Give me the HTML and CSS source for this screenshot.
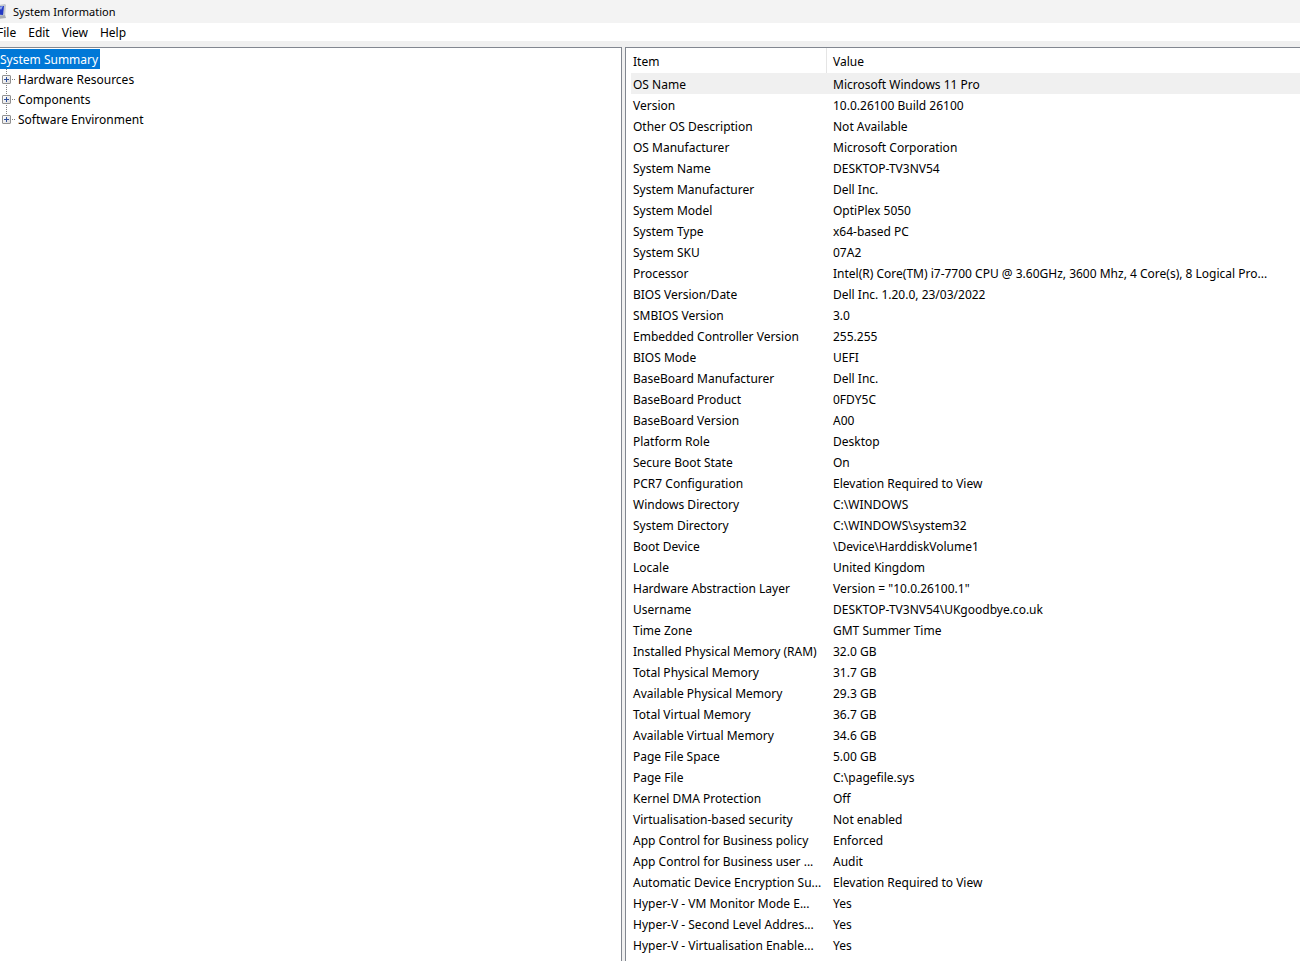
FILE: index.html
```html
<!DOCTYPE html>
<html lang="en">
  <head>
    <meta charset="UTF-8" />
    <meta name="viewport" content="width=device-width, initial-scale=1.0" />
    <title>System Information</title>
    <link rel="stylesheet" href="styles.css">
  </head>
  <body>
    <header class="title-bar">
      <svg class="app-icon" width="16" height="16" viewBox="0 0 16 16" aria-hidden="true">
        <path d="M1 2 L15 0 L16 1 L15 13 L2 12 Z" fill="#c4c8ce" />
        <path d="M2 3 L14 2 L13 11 L3 10 Z" fill="#2338c4" />
        <path d="M9 3 L13 2 L11 6 Z" fill="#8fa8f0" />
        <path d="M8 12 L15 11 L16 14 L8 15 Z" fill="#a9adb4" />
      </svg>
      <h1>System Information</h1>
    </header>

    <nav class="menu-bar">
      <button type="button">File</button>
      <button type="button">Edit</button>
      <button type="button">View</button>
      <button type="button">Help</button>
    </nav>

    <main class="panes">
      <section class="tree-pane">
        <a class="tree-root" href="#summary">System Summary</a>
        <ul class="tree">
          <li><button type="button" class="expander" aria-label="Expand Hardware Resources"></button><a href="#hardware">Hardware Resources</a></li>
          <li><button type="button" class="expander" aria-label="Expand Components"></button><a href="#components">Components</a></li>
          <li><button type="button" class="expander" aria-label="Expand Software Environment"></button><a href="#software">Software Environment</a></li>
        </ul>
      </section>

      <section class="detail-pane" id="summary">
        <table class="details">
          <thead>
            <tr><th class="item" scope="col">Item</th><th scope="col">Value</th></tr>
          </thead>
          <tbody>
            <tr class="selected"><td>OS Name</td><td>Microsoft Windows 11 Pro</td></tr>
            <tr><td>Version</td><td>10.0.26100 Build 26100</td></tr>
            <tr><td>Other OS Description</td><td>Not Available</td></tr>
            <tr><td>OS Manufacturer</td><td>Microsoft Corporation</td></tr>
            <tr><td>System Name</td><td>DESKTOP-TV3NV54</td></tr>
            <tr><td>System Manufacturer</td><td>Dell Inc.</td></tr>
            <tr><td>System Model</td><td>OptiPlex 5050</td></tr>
            <tr><td>System Type</td><td>x64-based PC</td></tr>
            <tr><td>System SKU</td><td>07A2</td></tr>
            <tr><td>Processor</td><td>Intel(R) Core(TM) i7-7700 CPU @ 3.60GHz, 3600 Mhz, 4 Core(s), 8 Logical Pro...</td></tr>
            <tr><td>BIOS Version/Date</td><td>Dell Inc. 1.20.0, 23/03/2022</td></tr>
            <tr><td>SMBIOS Version</td><td>3.0</td></tr>
            <tr><td>Embedded Controller Version</td><td>255.255</td></tr>
            <tr><td>BIOS Mode</td><td>UEFI</td></tr>
            <tr><td>BaseBoard Manufacturer</td><td>Dell Inc.</td></tr>
            <tr><td>BaseBoard Product</td><td>0FDY5C</td></tr>
            <tr><td>BaseBoard Version</td><td>A00</td></tr>
            <tr><td>Platform Role</td><td>Desktop</td></tr>
            <tr><td>Secure Boot State</td><td>On</td></tr>
            <tr><td>PCR7 Configuration</td><td>Elevation Required to View</td></tr>
            <tr><td>Windows Directory</td><td>C:\WINDOWS</td></tr>
            <tr><td>System Directory</td><td>C:\WINDOWS\system32</td></tr>
            <tr><td>Boot Device</td><td>\Device\HarddiskVolume1</td></tr>
            <tr><td>Locale</td><td>United Kingdom</td></tr>
            <tr><td>Hardware Abstraction Layer</td><td>Version = "10.0.26100.1"</td></tr>
            <tr><td>Username</td><td>DESKTOP-TV3NV54\UKgoodbye.co.uk</td></tr>
            <tr><td>Time Zone</td><td>GMT Summer Time</td></tr>
            <tr><td>Installed Physical Memory (RAM)</td><td>32.0 GB</td></tr>
            <tr><td>Total Physical Memory</td><td>31.7 GB</td></tr>
            <tr><td>Available Physical Memory</td><td>29.3 GB</td></tr>
            <tr><td>Total Virtual Memory</td><td>36.7 GB</td></tr>
            <tr><td>Available Virtual Memory</td><td>34.6 GB</td></tr>
            <tr><td>Page File Space</td><td>5.00 GB</td></tr>
            <tr><td>Page File</td><td>C:\pagefile.sys</td></tr>
            <tr><td>Kernel DMA Protection</td><td>Off</td></tr>
            <tr><td>Virtualisation-based security</td><td>Not enabled</td></tr>
            <tr><td>App Control for Business policy</td><td>Enforced</td></tr>
            <tr><td>App Control for Business user ...</td><td>Audit</td></tr>
            <tr><td>Automatic Device Encryption Su...</td><td>Elevation Required to View</td></tr>
            <tr><td>Hyper-V - VM Monitor Mode E...</td><td>Yes</td></tr>
            <tr><td>Hyper-V - Second Level Addres...</td><td>Yes</td></tr>
            <tr><td>Hyper-V - Virtualisation Enable...</td><td>Yes</td></tr>
          </tbody>
        </table>
      </section>
    </main>
  </body>
</html>
```

FILE: styles.css
```css
* {
  box-sizing: border-box;
}

body {
  display: flex;
  flex-direction: column;
  min-height: 100vh;
  margin: 0;
  overflow-x: hidden;
  font-family: "Noto Sans", "Open Sans", sans-serif;
  font-size: 12px;
  line-height: 20px;
  color: #000000;
  background-color: #f0f0f0;
}

button {
  font: inherit;
  color: inherit;
  border: none;
  background: none;
}

a {
  color: inherit;
  text-decoration: none;
}

.title-bar {
  display: flex;
  align-items: center;
  gap: 7px;
  height: 23px;
  margin-left: -10px;
  background-color: #f3f3f3;
}

.title-bar h1 {
  margin: 0;
  font-size: 11px;
  font-weight: normal;
}

.menu-bar {
  display: flex;
  height: 18px;
  margin-left: -9px;
  background-color: #ffffff;
}

.menu-bar button {
  padding: 0 6px;
}

.panes {
  display: grid;
  grid-template-columns: 622fr 675fr;
  gap: 3px;
  flex: 1;
  margin-top: 6px;
}

.tree-pane,
.detail-pane {
  border-top: 1px solid #828790;
  background-color: #ffffff;
}

.tree-pane {
  padding-top: 1px;
  border-right: 1px solid #828790;
}

.detail-pane {
  min-width: 0;
  padding-left: 5px;
  border-left: 1px solid #828790;
}

/* tree */
.tree-root {
  display: block;
  width: 100px;
  height: 20px;
  line-height: 22px;
  color: #ffffff;
  background-color: #0078d7;
}

.tree {
  margin: 0;
  padding: 0;
  list-style: none;
}

.tree li {
  display: flex;
  align-items: center;
  gap: 7px;
  height: 20px;
  padding-left: 2px;
  background-image:
    repeating-linear-gradient(to bottom, #808080 0 1px, transparent 1px 2px),
    repeating-linear-gradient(to right, #808080 0 1px, transparent 1px 2px);
  background-size: 1px 100%, 3px 1px;
  background-position: 6px 0, 12px 10px;
  background-repeat: no-repeat;
}

.tree li:last-child {
  background-size: 1px 10px, 3px 1px;
}

.tree a {
  padding-top: 2px;
}

.expander {
  width: 9px;
  height: 9px;
  padding: 0;
  border: 1px solid #919191;
  border-radius: 1px;
  background:
    linear-gradient(#30509c, #30509c) center / 5px 1px no-repeat,
    linear-gradient(#30509c, #30509c) center / 1px 5px no-repeat,
    linear-gradient(135deg, #ffffff, #dddddd);
}

/* details */
.details {
  width: 100%;
  table-layout: fixed;
  border-collapse: separate;
  border-spacing: 0;
}

.details th,
.details td {
  height: 21px;
  padding: 2px 2px 0;
  font-weight: normal;
  line-height: 19px;
  text-align: left;
  white-space: nowrap;
}

.details th {
  height: 25px;
}

.details .item {
  width: 196px;
  border-right: 1px solid #e5e5e5;
}

.details th + th,
.details td + td {
  padding-left: 6px;
}

.selected {
  background-color: #f0f0f0;
}
```
